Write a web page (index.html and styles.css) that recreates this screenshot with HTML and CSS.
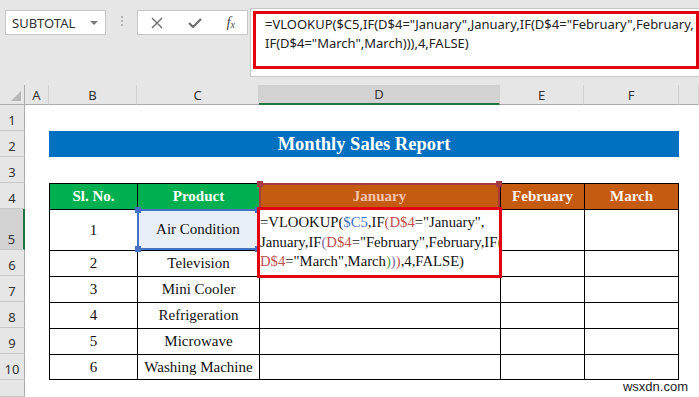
FILE: index.html
```html
<!DOCTYPE html>
<html lang="en">
<head>
    <meta charset="UTF-8">
    <meta name="viewport" content="width=device-width, initial-scale=1.0">
    <title>Monthly Sales Report</title>
    <link rel="stylesheet" href="styles.css">
</head>
<body>
    <div class="topbar">
        <div class="namebox">
            <span>SUBTOTAL</span>
            <span class="caret"></span>
        </div>
        <div class="grip"><i></i><i></i><i></i></div>
        <div class="fnbox">
            <svg width="12" height="12" viewBox="0 0 12 12"><path d="M1 1 L11 11 M11 1 L1 11" stroke="#6d6d6d" stroke-width="1.4" fill="none"/></svg>
            <svg width="14" height="12" viewBox="0 0 14 12"><path d="M1 6 L5 10 L13 2" stroke="#6d6d6d" stroke-width="2.2" fill="none"/></svg>
            <span class="fx"><i>f</i><sub>x</sub></span>
        </div>
        <div class="formula">
            <div class="formula-box">
                =VLOOKUP($C5,IF(D$4="January",January,IF(D$4="February",February,<br>IF(D$4="March",March))),4,FALSE)
            </div>
        </div>
    </div>

    <div class="sheet">
        <!-- column headers -->
        <div class="ch corner"></div>
        <div class="ch">A</div>
        <div class="ch">B</div>
        <div class="ch">C</div>
        <div class="ch sel">D</div>
        <div class="ch">E</div>
        <div class="ch">F</div>
        <div class="ch"></div>

        <!-- row 1 -->
        <div class="rh">1</div>
        <div></div><div></div><div></div><div></div><div></div><div></div><div></div>

        <!-- row 2 -->
        <div class="rh">2</div>
        <div></div>
        <div class="title">Monthly Sales Report</div>
        <div></div>

        <!-- row 3 -->
        <div class="rh">3</div>
        <div></div><div></div><div></div><div></div><div></div><div></div><div></div>

        <!-- row 4 -->
        <div class="rh">4</div>
        <div></div>
        <div class="t hd green">Sl. No.</div>
        <div class="t hd green">Product</div>
        <div class="t hd orange ref-red">
            <span class="jan">January</span>
            <b class="handle tl"></b><b class="handle tr"></b>
        </div>
        <div class="t hd orange">February</div>
        <div class="t hd orange last-col">March</div>
        <div></div>

        <!-- row 5 -->
        <div class="rh sel">5</div>
        <div></div>
        <div class="t">1</div>
        <div class="t ref-blue">
            Air Condition
            <b class="handle tl"></b><b class="handle tr"></b>
            <b class="handle bl"></b><b class="handle br"></b>
        </div>
        <div class="editor">
            =VLOOKUP(<span class="r-blue">$C5</span>,IF<span class="p2">(</span><span class="r-red">D$4</span>="January",<br>January,IF<span class="p3">(</span><span class="r-red">D$4</span>="February",February,IF<span class="p4">(</span><br><span class="r-red">D$4</span>="March",March<span class="p4">)</span><span class="p3">)</span><span class="p2">)</span>,4,FALSE)
        </div>
        <div class="t"></div>
        <div class="t last-col"></div>
        <div></div>

        <!-- row 6 -->
        <div class="rh">6</div>
        <div></div>
        <div class="t">2</div>
        <div class="t">Television</div>
        <div class="t"></div>
        <div class="t last-col"></div>
        <div></div>

        <!-- row 7 -->
        <div class="rh">7</div>
        <div></div>
        <div class="t">3</div>
        <div class="t">Mini Cooler</div>
        <div class="t"></div>
        <div class="t"></div>
        <div class="t last-col"></div>
        <div></div>

        <!-- row 8 -->
        <div class="rh">8</div>
        <div></div>
        <div class="t">4</div>
        <div class="t">Refrigeration</div>
        <div class="t"></div>
        <div class="t"></div>
        <div class="t last-col"></div>
        <div></div>

        <!-- row 9 -->
        <div class="rh">9</div>
        <div></div>
        <div class="t">5</div>
        <div class="t">Microwave</div>
        <div class="t"></div>
        <div class="t"></div>
        <div class="t last-col"></div>
        <div></div>

        <!-- row 10 -->
        <div class="rh">10</div>
        <div></div>
        <div class="t last-row">6</div>
        <div class="t last-row">Washing Machine</div>
        <div class="t last-row"></div>
        <div class="t last-row"></div>
        <div class="t last-row last-col"></div>
        <div></div>

        <!-- row 11 -->
        <div class="rh"></div>
        <div></div><div></div><div></div><div></div><div></div><div></div><div></div>

        <div class="watermark">wsxdn.com</div>
    </div>
</body>
</html>
```

FILE: styles.css
```css
body {
    margin: 0;
    width: 699px;
    height: 397px;
    overflow: hidden;
    background-color: #e6e6e6;
    font-family: "Noto Sans", sans-serif;
}

/* formula bar area */
.topbar {
    display: flex;
    align-items: flex-start;
    height: 85px;
}

.namebox {
    flex-shrink: 0;
    margin: 10px 0 0 5px;
    width: 101px;
    height: 25px;
    box-sizing: border-box;
    display: flex;
    align-items: center;
    justify-content: space-between;
    padding: 0 7px 0 6px;
    background-color: #fff;
    border: 1px solid #c6c6c6;
    font-size: 13px;
    color: #333;
}

.caret {
    width: 0;
    height: 0;
    border-left: 4px solid transparent;
    border-right: 4px solid transparent;
    border-top: 4px solid #7a7a7a;
}

.grip {
    flex-shrink: 0;
    width: 31px;
    margin-top: 16px;
    display: flex;
    flex-direction: column;
    align-items: center;
    gap: 2px;
}

.grip i {
    width: 2px;
    height: 2px;
    background-color: #b4b4b4;
}

.fnbox {
    flex-shrink: 0;
    margin-top: 10px;
    width: 111px;
    height: 25px;
    box-sizing: border-box;
    display: flex;
    align-items: center;
    justify-content: space-between;
    padding: 0 12px 0 13px;
    background-color: #fff;
    border: 1px solid #c6c6c6;
}

.fx {
    font-family: "Liberation Serif", serif;
    font-size: 15px;
    color: #4a4a4a;
}

.fx sub {
    font-size: 10px;
    font-style: italic;
    vertical-align: -1px;
}

.formula {
    flex: 1;
    min-width: 0;
    margin: 8px 0 0 2px;
    height: 69px;
    box-sizing: border-box;
    padding: 2px 0 0 2px;
    background-color: #fff;
    border: 1px solid #c6c6c6;
    border-right: none;
}

.formula-box {
    height: 58px;
    box-sizing: border-box;
    padding: 1px 0 0 9px;
    border: 3px solid #e0000e;
    font-size: 13px;
    line-height: 19px;
    color: #222;
    white-space: nowrap;
    overflow: hidden;
}

/* worksheet */
.sheet {
    position: relative;
    display: grid;
    grid-template-columns: 25px 24px 88px 122px 241px 84px 95px 1fr;
    grid-template-rows: 20px 26px 26px 26px 26px 41px 26px 26px 26px 26px 26px 1fr;
    height: 312px;
    background-color: #fff;
    font-family: "Liberation Serif", serif;
    font-size: 15px;
    color: #111;
}

.ch {
    display: flex;
    align-items: center;
    justify-content: center;
    box-sizing: border-box;
    background-color: #e6e6e6;
    border-right: 1px solid #d0d0d0;
    border-bottom: 1px solid #ababab;
    font-family: "Noto Sans", sans-serif;
    font-size: 13px;
    color: #333;
}

.ch.sel {
    background-color: #d2d2d2;
    border-bottom: 2px solid #217346;
}

.corner {
    position: relative;
    border-right: 1px solid #ababab;
}

.corner::after {
    content: "";
    position: absolute;
    right: 3px;
    bottom: 3px;
    width: 10px;
    height: 10px;
    background-color: #b8b8b8;
    clip-path: polygon(100% 0, 100% 100%, 0 100%);
}

.rh {
    display: flex;
    align-items: flex-end;
    justify-content: center;
    box-sizing: border-box;
    padding-bottom: 1px;
    line-height: 17px;
    background-color: #e6e6e6;
    border-right: 1px solid #ababab;
    border-bottom: 1px solid #c6c6c6;
    font-family: "Noto Sans", sans-serif;
    font-size: 13px;
    color: #333;
}

.rh.sel {
    background-color: #d2d2d2;
    border-right: 2px solid #217346;
}

.title {
    grid-column: span 5;
    display: flex;
    align-items: center;
    justify-content: center;
    background-color: #0070c0;
    color: #fff;
    font-weight: bold;
    font-size: 18.5px;
}

.t {
    position: relative;
    display: flex;
    align-items: center;
    justify-content: center;
    box-sizing: border-box;
    border-left: 1px solid #000;
    border-top: 1px solid #000;
    white-space: nowrap;
}

.t.last-col {
    border-right: 1px solid #000;
}

.t.last-row {
    border-bottom: 1px solid #000;
}

.green {
    background-color: #00b050;
    color: #fff;
    font-weight: bold;
}

.orange {
    background-color: #c55a11;
    color: #fdf3ea;
    font-weight: bold;
}

.jan {
    color: #f4c4ad;
}

/* reference highlights while editing */
.ref-red {
    border: 2px solid #a83c3c;
}

.ref-blue {
    background-color: #e9eff8;
    border: 2px solid #4472c4;
}

.handle {
    position: absolute;
    width: 6px;
    height: 6px;
    z-index: 2;
}

.ref-red .handle {
    background-color: #a33a44;
}

.ref-blue .handle {
    background-color: #4472c4;
}

.handle.tl { left: -4px; top: -4px; }
.handle.tr { right: -4px; top: -4px; }
.handle.bl { left: -4px; bottom: -4px; }
.handle.br { right: -4px; bottom: -4px; }

.editor {
    position: relative;
    z-index: 3;
    grid-row: span 2;
    box-sizing: border-box;
    padding: 4px 0 0 1px;
    background-color: #fff;
    outline: 3px solid #e0000e;
    outline-offset: -1px;
    font-size: 14.7px;
    line-height: 19.5px;
    white-space: nowrap;
}

.r-blue { color: #3b6fc4; }
.r-red { color: #c0504d; }
.p2 { color: #c0504d; }
.p3 { color: #8064a2; }
.p4 { color: #4f9a48; }

.watermark {
    position: absolute;
    right: 11px;
    bottom: 3px;
    font-family: "Liberation Sans", sans-serif;
    font-size: 13px;
    color: #222;
}
```
